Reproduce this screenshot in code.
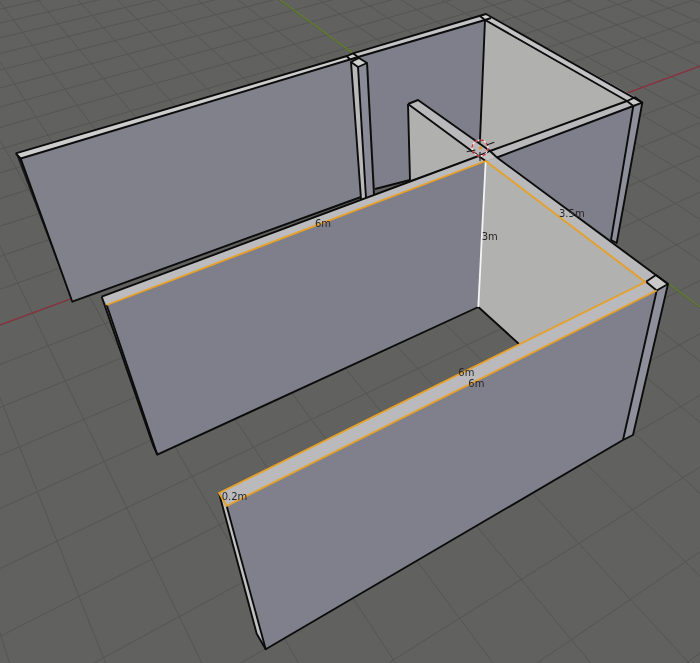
// Blender viewport: room walls with edge length overlays
const O = [480.5, 147.5]
const VX = [2250, -508]
const VY = [-337, -450]
const A = 0.0202

// project a floor grid coordinate into the picture
function project(u, v) {
  const s = u * A
  const t = v * (v > 0 ? 0.0331 : 0.0324)
  const d = 1 + s + t
  return [(O[0] + s * VX[0] + t * VY[0]) / d, (O[1] + s * VX[1] + t * VY[1]) / d]
}

function ray(from, through, k = 10) {
  return [from[0], from[1], from[0] + (through[0] - from[0]) * k, from[1] + (through[1] - from[1]) * k]
}

const gridLines = []
for (let u = -40; u <= 60; u++) gridLines.push(ray(VY, project(u, 0)))
for (let v = -26; v <= 60; v++) gridLines.push(ray(VX, project(0, v)))

const faces = [
  // back wall, blue side
  { c: '#7f7f8b', p: '358,57 485,20 480,150 418,100 408,104 410,180 375,189 368,63' },
  // lit inner side of the right back wall
  { c: '#b0b0ae', p: '485,20 627,101 490,151 480,148' },
  // long back strip
  { c: '#c4c4c6', p: '353,53 486,14 491,18 358,57' },
  { c: '#c2c2c4', p: '487,14 635,97 627,101 487,20' },
  { c: '#cfcfd0', p: '480,16 486,14 491,18 485,20' },
  // left back wall
  { c: '#81818c', p: '20.7,158.5 350,59.5 352,62 361,197 72.3,301.7' },
  { c: '#cdcdce', p: '15.7,153.3 347,56 350,59.5 20.7,158.5' },
  { c: '#d0d0d1', p: '346.7,56 353,53.3 358,57 350,59.3' },
  { c: '#1a1a1a', p: '15.7,153.3 20.7,158.5 72.3,301.7' },
  // cross wall column
  { c: '#b9b9ba', p: '351,62 358,67 366,198 361,199' },
  { c: '#8b8b97', p: '358,67 367,63 374,195 366,198' },
  { c: '#cfcfd0', p: '351,62 359,58 367,63 358,67' },
  // middle wall end
  { c: '#b0b0ae', p: '408,104 410,180 478.5,156 480,152' },
  { c: '#b9b9bb', p: '408,104 418,100 490,151 478.5,156' },
  // right wall
  { c: '#7f7f8b', p: '497,157.5 633,106 611,240' },
  { c: '#8f8f9b', p: '633,106 642.3,102.7 616.7,243 611,240' },
  { c: '#b9b9bb', p: '490,151 627,101 633.3,106 497,157.5' },
  { c: '#c9c9ca', p: '627,101 635,97.3 642.3,102.7 633.3,106' },
  // front left wall
  { c: '#7f7f8b', p: '106.7,305 485.7,161 478.3,307 157.3,454.7' },
  { c: '#9d9da2', p: '101.7,296.7 106.7,305 157.3,454.7 153,445' },
  { c: '#bcbcbe', p: '101.7,296.7 478.5,156 485.7,161 106.7,305' },
  // inner lit wall, seen over the floor
  { c: '#b1b1af', p: '485.7,161 645,282 519,344 478.3,307' },
  { c: '#b9b9bb', p: '497,157.5 656,275 646,282 485.7,161' },
  { c: '#c3c3c4', p: '478.5,156 490,151 497,157.5 485.7,161' },
  // front wall
  { c: '#80808c', p: '226.7,506 656.7,290.5 623,440 265.7,649.3' },
  { c: '#c0c0c1', p: '219,493 226.7,506 265.7,649.3 256.7,633.7' },
  { c: '#bababc', p: '219,493 646,281.7 656.7,290.5 226.7,506' },
  { c: '#8f8f9b', p: '656.7,290.5 668,284 633,435 623,440' },
  { c: '#c9c9ca', p: '646,281.7 656,275 668,284 656.7,290.5' },
]

const blackLines = [
  '15.7,153.3 347,56 353,53.3 486,14 642.3,102.7 616.7,243 611,240',
  '15.7,153.3 20.7,158.5 72.3,301.7 361,197',
  '20.7,158.5 350,59.5',
  '346.7,56 350,59.5 358,57 353,53.3',
  '358,57 485,20 627,101',
  '480,16 485,20 491,18',
  '485,20 480,140',
  '351,62 359,58 367,63 358,67 351,62 361,199',
  '358,67 366,198',
  '367,63 374,195',
  '375,189 410,180',
  '408,104 418,100 490,151 627,101 635,97.3 642.3,102.7 633.3,106 627,101',
  '408,104 410,180',
  '408,104 478.5,156 490,151',
  '490,151 497,157.5',
  '497,157.5 633.3,106 611,240',
  '497,157.5 668,284',
  '101.7,296.7 478.5,156',
  '101.7,296.7 153,445 157.3,454.7 478.3,307 519,344',
  '106.7,305 157.3,454.7',
  '646,281.7 656,275 668,284 656.7,290.5 646,281.7',
  '656.7,290.5 623,440',
  '668,284 633,435 623,440',
  '219,493 256.7,633.7 265.7,649.3 623,440',
  '226.7,506 265.7,649.3',
  '478.5,156 485.7,161',
]

const orangeLines = [
  '106.7,305 485.7,161 645,282',
  '646,281.7 219,493 226.7,506 656.7,290.5',
]

const labels = [
  { text: '6m', x: 315, y: 227 },
  { text: '3m', x: 481.7, y: 240 },
  { text: '3.5m', x: 559, y: 217 },
  { text: '6m', x: 458.3, y: 375.5 },
  { text: '6m', x: 468.3, y: 386.5 },
  { text: '0.2m', x: 221.7, y: 500 },
]

export default function App() {
  return (
    <div className="w-[700px] h-[663px] overflow-hidden bg-[#61615f]">
      <svg width="700" height="663" viewBox="0 0 700 663" className="block blur-[0.35px]">
        {gridLines.map((l, i) => (
          <line key={i} x1={l[0]} y1={l[1]} x2={l[2]} y2={l[3]} stroke="#555553" strokeWidth="1" />
        ))}
        <line x1="0" y1="325" x2="700" y2="66" stroke="#8f2f3d" strokeWidth="1.3" />
        <line x1="280" y1="0" x2="700" y2="307" stroke="#5f7f23" strokeWidth="1.3" />

        {faces.map((f, i) => (
          <polygon key={i} points={f.p} fill={f.c} />
        ))}

        {blackLines.map((p, i) => (
          <polyline key={i} points={p} fill="none" stroke="#0c0c0c" strokeWidth="1.9" strokeLinejoin="round" />
        ))}

        <line x1="485.7" y1="161" x2="478.3" y2="307" stroke="#f4f4f4" strokeWidth="1.8" />
        {orangeLines.map((p, i) => (
          <polyline key={i} points={p} fill="none" stroke="#e9a125" strokeWidth="1.8" strokeLinejoin="round" />
        ))}

        {/* 3d cursor */}
        <circle cx="480" cy="148" r="8" fill="none" stroke="#f2f2f2" strokeWidth="1.3" />
        <circle cx="480" cy="148" r="8" fill="none" stroke="#cf2b35" strokeWidth="1.3" strokeDasharray="3.5 2.8" />
        <path d="M466.7 151.7 L475.3 150 M486.7 145 L494.3 142.3 M480 138 L480 143 M480 152 L480 161" stroke="#1a1a1a" strokeWidth="1.1" fill="none" />
        <circle cx="480.4" cy="148" r="1.6" fill="#e8912a" />

        {labels.map((l, i) => (
          <text key={i} x={l.x} y={l.y} fill="#2b2626" className="font-['DejaVu_Sans',sans-serif] text-[10px]">
            {l.text}
          </text>
        ))}
      </svg>
    </div>
  )
}
